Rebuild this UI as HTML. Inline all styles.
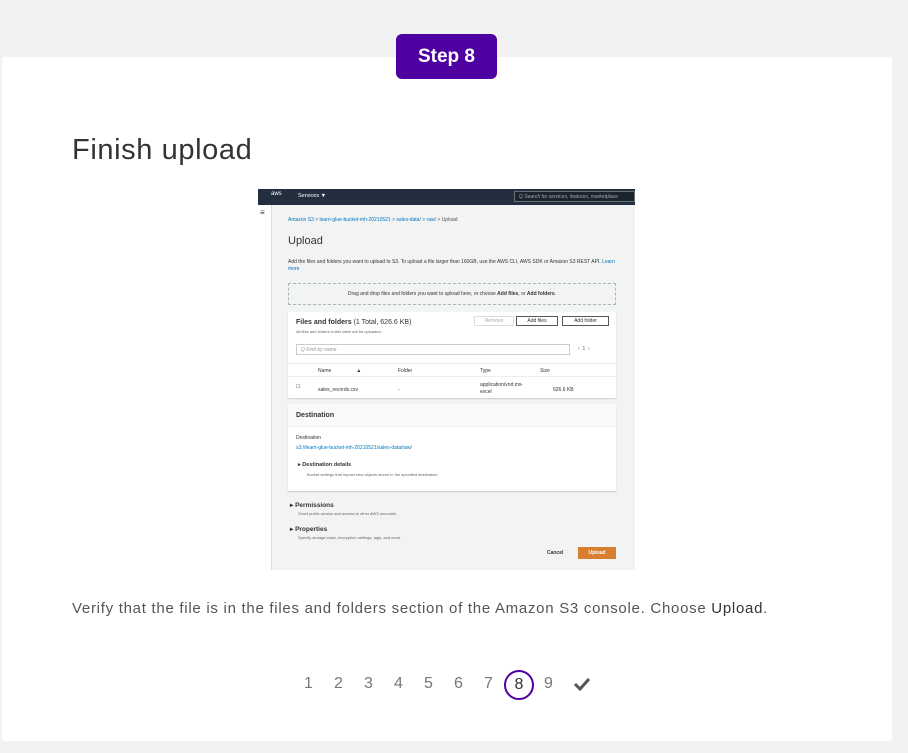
<!DOCTYPE html>
<html><head><style>
*{margin:0;padding:0;box-sizing:border-box}
body{width:908px;height:753px;background:#f2f2f2;font-family:"Liberation Sans",sans-serif;position:relative;overflow:hidden}
.card{position:absolute;left:2px;top:57px;width:890px;height:684px;background:#fff;border-radius:3px}
.badge{position:absolute;left:396px;top:34px;width:101px;height:45px;background:#4e00a0;border-radius:6px;color:#fff;font-weight:bold;font-size:19px;text-align:center;line-height:45px;z-index:2}
h1{position:absolute;left:72px;top:134px;font-weight:normal;font-size:29px;color:#333;letter-spacing:0.6px}
.shot{position:absolute;left:258px;top:189px;width:377px;height:381px;background:#f2f3f3;overflow:hidden;font-size:5px;color:#333}
.a{position:absolute}
.p{position:absolute;left:72px;top:600px;font-size:15px;color:#555;letter-spacing:0.72px;white-space:nowrap}
.pg{position:absolute;top:675px;font-size:16px;color:#777}
</style></head><body>
<div class="card"></div>
<div class="badge">Step 8</div>
<h1>Finish upload</h1>
<div class="shot">
 <div class="a" style="left:0;top:0;width:377px;height:16px;background:#232f3e"></div>
 <div class="a" style="left:13px;top:2px;color:#fff;font-size:6px">aws</div>
 <div class="a" style="left:40px;top:4px;color:#fff;font-size:5.5px">Services ▼</div>
 <div class="a" style="left:256px;top:2px;width:121px;height:11px;border:1px solid #687078;background:#1a232e;color:#aaa;font-size:5px;padding:2px 4px;font-style:italic">Q Search for services, features, marketplace</div>
 <div class="a" style="left:0;top:16px;width:14px;height:365px;background:#fff;border-right:1px solid #ddd"></div>
 <div class="a" style="left:2px;top:19px;font-size:8px">≡</div>
 <div class="a" style="left:30px;top:28px;color:#0073bb">Amazon S3 &gt; learn-glue-bucket-mh-20210521 &gt; sales-data/ &gt; raw/ <span style="color:#555">&gt; Upload</span></div>
 <div class="a" style="left:30px;top:46px;font-size:11px">Upload</div>
 <div class="a" style="left:30px;top:70px;width:330px;line-height:7px">Add the files and folders you want to upload to S3. To upload a file larger than 160GB, use the AWS CLI, AWS SDK or Amazon S3 REST API. <span style="color:#0073bb">Learn more</span></div>
 <div class="a" style="left:30px;top:94px;width:328px;height:22px;border:1px dashed #aab7b8;text-align:center;line-height:20px">Drag and drop files and folders you want to upload here, or choose <b>Add files</b>, or <b>Add folders</b>.</div>
 <div class="a" style="left:30px;top:123px;width:328px;height:86px;background:#fff;box-shadow:0 1px 1px #ccc"></div>
 <div class="a" style="left:38px;top:130px;font-size:7px"><b>Files and folders</b> (1 Total, 626.6 KB)</div>
 <div class="a" style="left:38px;top:140px;font-size:4px;color:#666">All files and folders in this table will be uploaded.</div>
 <div class="a" style="left:216px;top:127px;width:40px;height:10px;border:1px solid #ddd;color:#aaa;text-align:center;line-height:8px">Remove</div>
 <div class="a" style="left:258px;top:127px;width:42px;height:10px;border:1px solid #555;text-align:center;line-height:8px">Add files</div>
 <div class="a" style="left:304px;top:127px;width:47px;height:10px;border:1px solid #555;text-align:center;line-height:8px">Add folder</div>
 <div class="a" style="left:38px;top:155px;width:274px;height:11px;border:1px solid #ccc;padding:2px 4px;color:#999;font-style:italic">Q Find by name</div>
 <div class="a" style="left:320px;top:157px;color:#555">‹ &nbsp;1&nbsp; ›</div>
 <div class="a" style="left:30px;top:174px;width:328px;height:1px;background:#eee"></div>
 <div class="a" style="left:60px;top:179px">Name &nbsp;&nbsp;&nbsp;&nbsp;&nbsp;&nbsp;&nbsp;&nbsp;&nbsp;&nbsp;&nbsp;&nbsp;&nbsp;&nbsp;&nbsp;&nbsp;&nbsp;▲</div>
 <div class="a" style="left:140px;top:179px">Folder</div><div class="a" style="left:222px;top:179px">Type</div><div class="a" style="left:282px;top:179px">Size</div>
 <div class="a" style="left:30px;top:187px;width:328px;height:1px;background:#eee"></div>
 <div class="a" style="left:38px;top:195px">☐</div>
 <div class="a" style="left:60px;top:198px">sales_records.csv</div>
 <div class="a" style="left:140px;top:198px">-</div>
 <div class="a" style="left:222px;top:193px;line-height:7px">application/vnd.ms-<br>excel</div>
 <div class="a" style="left:295px;top:198px">626.6 KB</div>
 <div class="a" style="left:30px;top:215px;width:328px;height:87px;background:#fff;box-shadow:0 1px 1px #ccc"></div>
 <div class="a" style="left:30px;top:215px;width:328px;height:23px;background:#fafafa;border-bottom:1px solid #eee"></div>
 <div class="a" style="left:38px;top:223px;font-size:7px;font-weight:bold">Destination</div>
 <div class="a" style="left:38px;top:246px">Destination</div>
 <div class="a" style="left:38px;top:256px;color:#0073bb">s3://learn-glue-bucket-mh-20210521/sales-data/raw/</div>
 <div class="a" style="left:40px;top:273px;font-weight:bold;font-size:5.5px">▸ Destination details</div>
 <div class="a" style="left:49px;top:283px;font-size:4px;color:#666">Bucket settings that impact new objects stored in the specified destination.</div>
 <div class="a" style="left:32px;top:312px;font-weight:bold;font-size:6.5px">▸ Permissions</div>
 <div class="a" style="left:40px;top:322px;font-size:4px;color:#666">Grant public access and access to other AWS accounts.</div>
 <div class="a" style="left:32px;top:336px;font-weight:bold;font-size:6.5px">▸ Properties</div>
 <div class="a" style="left:40px;top:346px;font-size:4px;color:#666">Specify storage class, encryption settings, tags, and more.</div>
 <div class="a" style="left:289px;top:361px;font-weight:bold">Cancel</div>
 <div class="a" style="left:320px;top:358px;width:38px;height:12px;background:#d77f2e;color:#fff;font-weight:bold;text-align:center;line-height:12px">Upload</div>
</div>
<div class="p">Verify that the file is in the files and folders section of the Amazon S3 console. Choose <span style="color:#333">Upload</span>.</div>
<div class="pg" style="left:304px">1</div><div class="pg" style="left:334px">2</div><div class="pg" style="left:364px">3</div><div class="pg" style="left:394px">4</div><div class="pg" style="left:424px">5</div><div class="pg" style="left:454px">6</div><div class="pg" style="left:484px">7</div>
<div class="a" style="position:absolute;left:504px;top:670px;width:30px;height:30px;border:2px solid #4e00a0;border-radius:50%;text-align:center;line-height:26px;font-size:16px;color:#333">8</div>
<div class="pg" style="left:544px">9</div>
<svg style="position:absolute;left:573px;top:677px" width="18" height="14" viewBox="0 0 18 14"><path d="M2 7l5 5L16 2" stroke="#555" stroke-width="3" fill="none"/></svg>
</body></html>
